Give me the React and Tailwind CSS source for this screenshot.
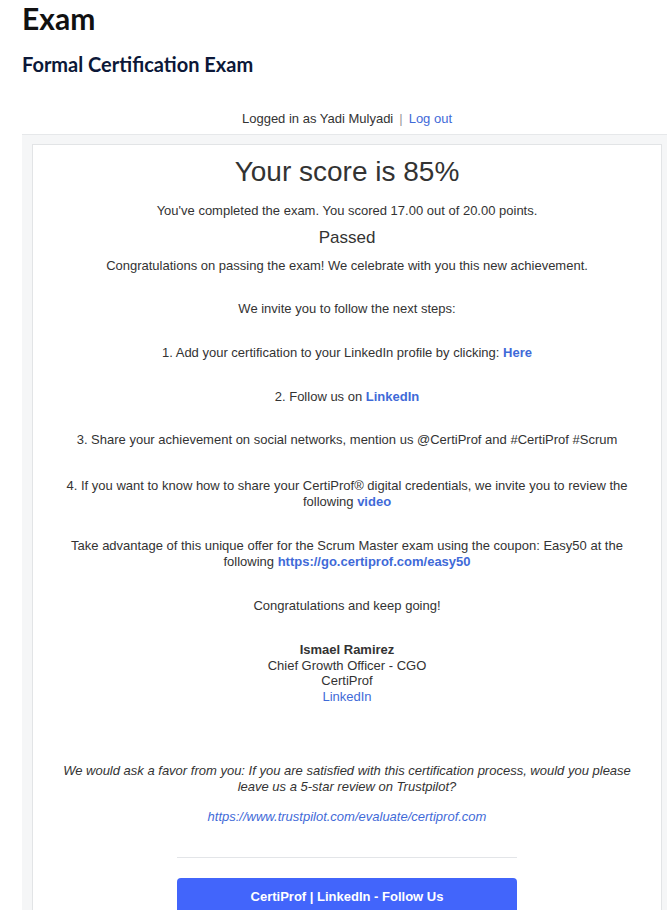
import React from "react";

const link = "text-[#3f6ad8]";

export default function App() {
  return (
    <div className="w-[667px] h-[910px] overflow-hidden bg-white">
      <div className="ml-[22px] w-[650px]">
        {/* Page headings */}
        <h1 className="font-['Lato',sans-serif] font-bold text-[30px] leading-[36px] text-[#111] mt-0">
          Exam
        </h1>
        <h2 className="font-['Lato',sans-serif] font-bold text-[20px] leading-[24px] text-[#0c1838] mt-[16px]">
          Formal Certification Exam
        </h2>

        <div className="font-['Liberation_Sans',Arial,sans-serif] text-[13px] text-[#333]">
          <div className="mt-[31px] h-[24px] flex items-center justify-center">
            Logged in as Yadi Mulyadi
            <span className="mx-[6px] text-[#999]">|</span>
            <span className={link}>Log out</span>
          </div>

          {/* Result panel */}
          <div className="mt-[3px] border-t border-[#e6e8ea] bg-[#f5f6f7] px-[10px] pt-[9px]">
            <div className="bg-white border border-[#e2e4e6] px-[22px] pt-[8px] pb-[40px] text-center leading-[16px]">
              <div className="text-[28px] leading-[38px] text-[#333]">Your score is 85%</div>
              <p className="mt-[12px]">
                You've completed the exam. You scored 17.00 out of 20.00 points.
              </p>
              <div className="mt-[8px] text-[17px] leading-[22px]">Passed</div>
              <p className="mt-[9px]">
                Congratulations on passing the exam! We celebrate with you this new achievement.
              </p>
              <p className="mt-[27px]">We invite you to follow the next steps:</p>
              <p className="mt-[28px]">
                1. Add your certification to your LinkedIn profile by clicking:{" "}
                <span className={`${link} font-bold`}>Here</span>
              </p>
              <p className="mt-[28px]">
                2. Follow us on <span className={`${link} font-bold`}>LinkedIn</span>
              </p>
              <p className="mt-[27px]">
                3. Share your achievement on social networks, mention us @CertiProf and #CertiProf #Scrum
              </p>
              <p className="mt-[30px] px-[10px]">
                4. If you want to know how to share your CertiProf® digital credentials, we invite you to review the following{" "}
                <span className={`${link} font-bold`}>video</span>
              </p>
              <p className="mt-[28px] px-[10px]">
                Take advantage of this unique offer for the Scrum Master exam using the coupon: Easy50 at the following{" "}
                <span className={`${link} font-bold`}>https://go.certiprof.com/easy50</span>
              </p>
              <p className="mt-[28px]">Congratulations and keep going!</p>

              <div className="mt-[28px] leading-[15.5px]">
                <div className="font-bold">Ismael Ramirez</div>
                <div>Chief Growth Officer - CGO</div>
                <div>CertiProf</div>
                <div className={link}>LinkedIn</div>
              </div>

              <p className="mt-[59px] italic">
                We would ask a favor from you: If you are satisfied with this certification process, would you please leave us a 5-star review on Trustpilot?
              </p>
              <p className={`mt-[14px] italic ${link}`}>
                https://www.trustpilot.com/evaluate/certiprof.com
              </p>

              <div className="mx-auto mt-[32px] w-[340px] border-t border-[#e3e5e8]" />
              <div className="mx-auto mt-[20px] w-[340px] h-[38px] rounded-[4px] bg-[#4265fb] text-white font-bold flex items-center justify-center">
                CertiProf | LinkedIn - Follow Us
              </div>
            </div>
          </div>
        </div>
      </div>
    </div>
  );
}
